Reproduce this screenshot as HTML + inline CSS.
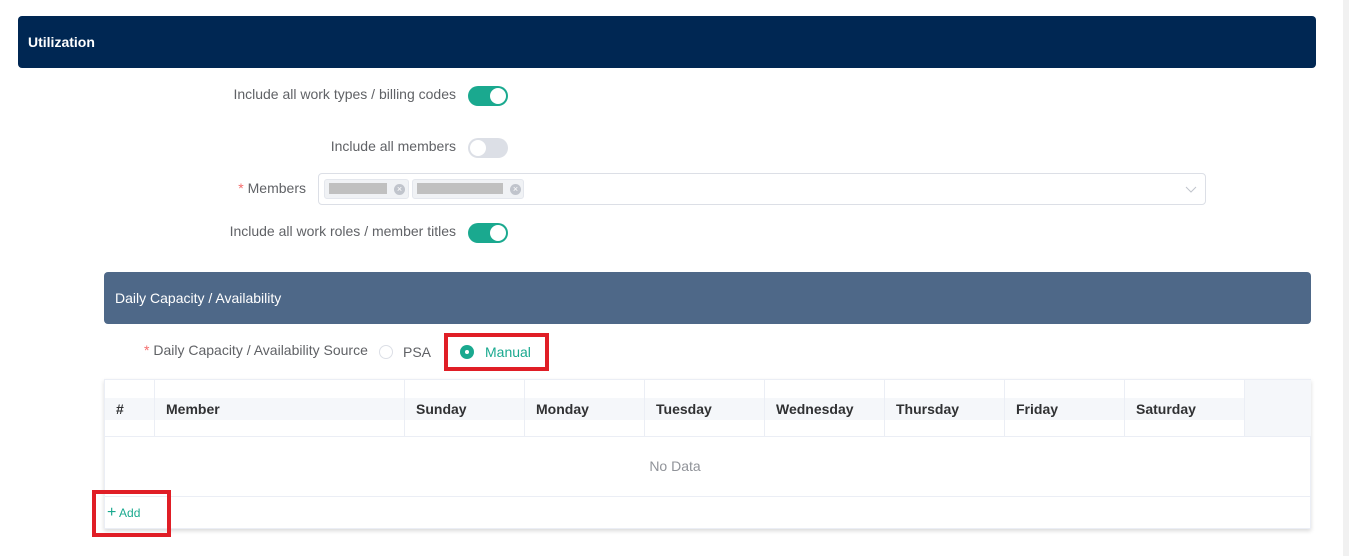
<!DOCTYPE html>
<html><head><style>
*{box-sizing:border-box;margin:0;padding:0}
body{width:1349px;height:556px;background:#fff;font-family:"Liberation Sans",Arial,sans-serif;position:relative;overflow:hidden;color:#606266}
.abs{position:absolute}
.sb{right:0;top:0;width:6px;height:556px;background:#f1f1f1}
.h1{left:18px;top:16px;width:1298px;height:52px;background:#002753;border-radius:4px;color:#fff;font-weight:bold;font-size:14px;line-height:52px;padding-left:10px}
.lab{font-size:14px;color:#606266;text-align:right;width:300px}
.sw{width:40px;height:20px;border-radius:10px;background:#1aa98f}
.sw::after{content:"";position:absolute;top:2px;left:22px;width:16px;height:16px;border-radius:50%;background:#fff}
.sw.off{background:#dcdfe6}
.sw.off::after{left:2px}
.sel{left:318px;top:173px;width:888px;height:32px;border:1px solid #dcdfe6;border-radius:4px}
.tag{top:5px;height:20px;background:#f0f2f5;border:1px solid #e4e7ed;border-radius:3px}
.tag i{position:absolute;top:3px;left:4px;height:11px;background:#c0c0c0}
.tag b{position:absolute;top:4px;width:11px;height:11px;border-radius:50%;background:#c0c4cc;color:#fff;font-size:9px;line-height:11px;text-align:center;font-weight:normal}
.h2{left:104px;top:272px;width:1207px;height:52px;background:#4e6888;border-radius:4px;color:#fff;font-size:14px;line-height:52px;padding-left:11px}
.tbl{left:104px;top:379px;width:1207px;height:150px;box-shadow:0 2px 4px rgba(0,0,0,.15);background:#fff;border:1px solid #ebeef5}
.th{top:0;height:57px;border-right:1px solid #ebeef5;border-bottom:1px solid #ebeef5}
.th span{position:absolute;top:18px;left:0;right:0;height:22px;background:#f5f7fa;font-weight:bold;font-size:14px;color:#303133;line-height:22px;padding-left:11px}
.red{border:4px solid #e01e26}
</style></head><body>
<div class="abs sb"></div>
<div class="abs h1">Utilization</div>

<div class="abs lab" style="left:156px;top:86px">Include all work types / billing codes</div>
<div class="abs sw" style="left:468px;top:86px"></div>
<div class="abs lab" style="left:156px;top:138px">Include all members</div>
<div class="abs sw off" style="left:468px;top:138px"></div>
<div class="abs lab" style="left:6px;top:180px"><span style="color:#f56c6c">* </span>Members</div>
<div class="abs sel">
 <div class="abs tag" style="left:5px;width:85px"><i style="width:58px"></i><b style="left:69px">×</b></div>
 <div class="abs tag" style="left:93px;width:112px"><i style="width:86px"></i><b style="left:97px">×</b></div>
 <svg class="abs" style="right:8px;top:10px" width="12" height="10" viewBox="0 0 12 10"><path d="M1 3l5 5 5-5" fill="none" stroke="#c0c4cc" stroke-width="1"/></svg>
</div>
<div class="abs lab" style="left:156px;top:223px">Include all work roles / member titles</div>
<div class="abs sw" style="left:468px;top:223px"></div>

<div class="abs h2">Daily Capacity / Availability</div>
<div class="abs" style="left:144px;top:342px;font-size:14px"><span style="color:#f56c6c">* </span>Daily Capacity / Availability Source</div>
<div class="abs" style="left:379px;top:345px;width:14px;height:14px;border:1px solid #dcdfe6;border-radius:50%"></div>
<div class="abs" style="left:403px;top:344px;font-size:14px">PSA</div>
<div class="abs red" style="left:444px;top:333px;width:105px;height:38px"></div>
<div class="abs" style="left:460px;top:345px;width:14px;height:14px;border-radius:50%;background:#1aa98f"><div class="abs" style="left:5px;top:5px;width:4px;height:4px;border-radius:50%;background:#fff"></div></div>
<div class="abs" style="left:485px;top:344px;font-size:14px;color:#1aa98f">Manual</div>

<div class="abs tbl">
 <div class="abs th" style="left:0;width:50px"><span>#</span></div>
 <div class="abs th" style="left:50px;width:250px"><span>Member</span></div>
 <div class="abs th" style="left:300px;width:120px"><span>Sunday</span></div>
 <div class="abs th" style="left:420px;width:120px"><span>Monday</span></div>
 <div class="abs th" style="left:540px;width:120px"><span>Tuesday</span></div>
 <div class="abs th" style="left:660px;width:120px"><span>Wednesday</span></div>
 <div class="abs th" style="left:780px;width:120px"><span>Thursday</span></div>
 <div class="abs th" style="left:900px;width:120px"><span>Friday</span></div>
 <div class="abs th" style="left:1020px;width:120px"><span>Saturday</span></div>
 <div class="abs th" style="left:1140px;width:66px;background:#f5f7fa;border-right:none"></div>
 <div class="abs" style="left:0;top:57px;width:1205px;height:60px;border-bottom:1px solid #ebeef5"></div>
 <div class="abs" style="left:0;top:57px;width:1140px;height:58px;text-align:center;line-height:58px;font-size:14px;color:#909399">No Data</div>
 <div class="abs" style="left:2px;top:124px;font-size:12px;color:#1aa98f"><span style="font-size:16px">+</span> Add</div>
</div>
<div class="abs red" style="left:92px;top:490px;width:79px;height:47px"></div>
</body></html>
